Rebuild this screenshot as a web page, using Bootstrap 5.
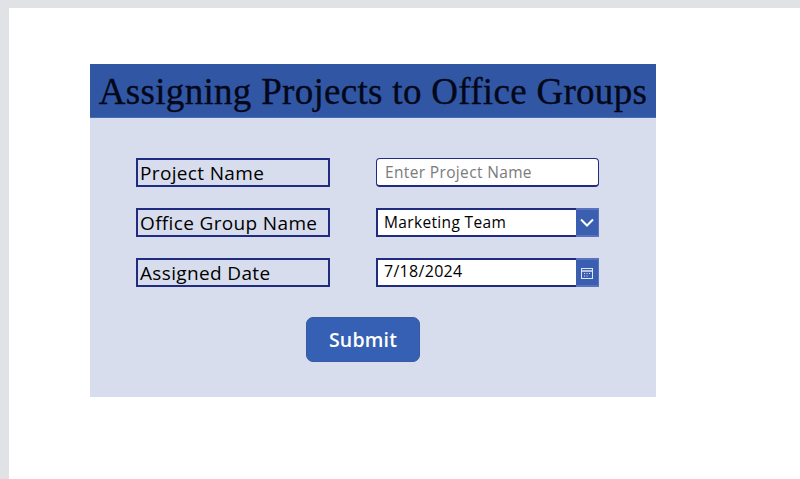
<!DOCTYPE html>
<html lang="en">
<head>
<meta charset="utf-8">
<title>Assigning Projects to Office Groups</title>
<link href="https://cdn.jsdelivr.net/npm/bootstrap@5.3.0/dist/css/bootstrap.min.css" rel="stylesheet">
<style>
html,body{height:479px;overflow:hidden}
body{background:#e1e2e6;padding:8px 0 0 9px;font-family:"Open Sans",sans-serif;color:#000}
.canvas-area{background:#fff;height:471px;padding:56px 0 0 81px}
.form-panel{width:566px;height:333px;background:#d7ddec}
.title-bar{height:54px;background:#3157a4;border-bottom:1px solid #4a6bb0}
.title-bar h1{font-family:"Liberation Serif",serif;font-size:37px;line-height:55px;margin:0;color:#03071a;letter-spacing:.3px;white-space:nowrap;-webkit-text-stroke:.35px #03071a}
.form-body{padding:40px 57px 0 46px}
.field-row{gap:46px;margin-bottom:21px}
.field-label{width:194px;height:29px;border:2px solid #1f2c80;font-size:19px;letter-spacing:.35px;line-height:26px;padding-left:2px;margin:0;white-space:nowrap}
.field-box{width:223px;height:29px;border:2px solid #1f2c80;background:#fff;font-size:15.5px;letter-spacing:.35px;color:#000}
.text-entry{border-radius:4px;border-width:1px 1px 2px;padding:0 8px;font-family:inherit;outline:0;box-shadow:none;line-height:25px}
.text-entry::placeholder{color:#7b7b7b;opacity:1}
.box-text{padding-left:6px;line-height:25px}
.date-text{font-size:16px;letter-spacing:.3px;margin-top:-2px;padding-left:6px}
.box-btn{width:23px;background:#3b5fb0;margin:-2px -2px -2px 0;border:solid #5a72bd;border-width:2px 1px 2px 0}
.send-btn{width:114px;height:45px;background:#3560b3;border:1px solid #3a5a9f;border-radius:7px;color:#fff;font-size:19.5px;font-weight:600;letter-spacing:.2px;padding:0;margin:9px 0 0 170px;line-height:1}
.send-btn:hover{background:#3560b3;color:#fff}
</style>
</head>
<body>
<div class="canvas-area">
  <div class="form-panel">
    <div class="title-bar text-center"><h1>Assigning Projects to Office Groups</h1></div>
    <form class="form-body">
      <div class="d-flex field-row">
        <label class="field-label" for="pn">Project Name</label>
        <input id="pn" class="field-box text-entry" type="text" placeholder="Enter Project Name">
      </div>
      <div class="d-flex field-row">
        <label class="field-label">Office Group Name</label>
        <div class="field-box d-flex align-items-center justify-content-between">
          <span class="box-text">Marketing Team</span>
          <span class="box-btn d-flex align-items-center justify-content-center align-self-stretch">
            <svg width="14" height="9" viewBox="0 0 14 9" fill="none" stroke="#fff" stroke-width="2"><path d="M1 1.5l6 6 6-6"/></svg>
          </span>
        </div>
      </div>
      <div class="d-flex field-row">
        <label class="field-label">Assigned Date</label>
        <div class="field-box d-flex align-items-center justify-content-between">
          <span class="box-text date-text">7/18/2024</span>
          <span class="box-btn d-flex align-items-center justify-content-center align-self-stretch">
            <svg width="12" height="12" viewBox="0 0 12 12" fill="none" stroke="#dfe6f7" stroke-width="1"><rect x=".5" y="1.5" width="11" height="10"/><path d="M.5 4h11" stroke-width="1.5"/><path d="M3 6.5h1M5.5 6.5h1M8 6.5h1M3 9h1M5.5 9h1" /></svg>
          </span>
        </div>
      </div>
      <button type="button" class="btn send-btn">Submit</button>
    </form>
  </div>
</div>
<script src="https://cdn.jsdelivr.net/npm/bootstrap@5.3.0/dist/js/bootstrap.bundle.min.js"></script>
</body>
</html>
